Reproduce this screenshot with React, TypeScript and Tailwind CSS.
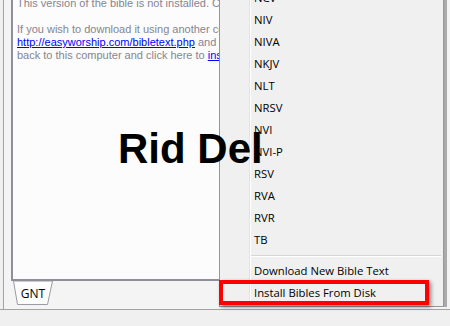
const bibles = ["NCV", "NIV", "NIVA", "NKJV", "NLT", "NRSV", "NVI", "NVI-P", "RSV", "RVA", "RVR", "TB"];

function MenuItem({ label }: { label: string }) {
  return (
    <div className="h-[22px] flex items-center pl-[34px] text-[11.3px] text-black leading-none">{label}</div>
  );
}

export default function App() {
  return (
    <div className="relative w-[450px] h-[326px] overflow-hidden bg-[#f0f0f0] font-['Liberation_Sans',sans-serif]">
      <div className="h-[310px] flex flex-col border-b border-[#a3a3a3]">
        <div className="ml-[3px] flex-1 flex flex-col border-l border-[#a2a4ad] pl-[7px] bg-[#f4f4f4]">
          <div className="h-[281px] border-l-2 border-r border-b-2 border-[#8e8f98] bg-[#fcfcfc] w-[420px] overflow-hidden">
            <div className="mt-[-3px] pl-[4px] text-[11px] leading-[13px] text-[#858590] whitespace-nowrap">
              <p>This version of the bible is not installed. Click here to download it.</p>
              <p className="h-[13px]"></p>
              <p>If you wish to download it using another computer, go to</p>
              <p>
                <span className="text-[#0000ff] underline">http://easyworship.com/bibletext.php</span> and download it, then copy it
              </p>
              <p>
                back to this computer and click here to <span className="text-[#0000ff] underline">install</span>
              </p>
            </div>
          </div>
          <div className="flex-1 flex pl-[2px]">
            <div className="relative w-[40px] h-[24px] flex items-center justify-center">
              <svg className="absolute inset-0" width="40" height="24" viewBox="0 0 40 24">
                <polygon points="0.5,0 4.5,23.5 34.5,23.5 39.5,0" fill="#fdfdfd" stroke="#9a9ba3" strokeWidth="1" />
              </svg>
              <span className="relative text-[12px] text-black font-['Open_Sans',sans-serif] pt-[2px]">GNT</span>
            </div>
          </div>
        </div>
      </div>

      {/* popup menu */}
      <div className="absolute left-[219px] top-[-14px] w-[228px] flex">
        <div className="relative w-[225px] bg-[#f0f0f0] border border-[#979797] pb-[2px] font-['Open_Sans',sans-serif]">
          <div className="absolute left-[29px] top-0 bottom-0 w-[2px] border-l border-[#e2e3e3] border-r border-r-white"></div>
          {bibles.map((b) => (
            <MenuItem key={b} label={b} />
          ))}
          <div className="h-[9px] flex items-center pl-[31px] pr-[2px]">
            <div className="w-full border-t border-[#d7d7d7] border-b border-b-white"></div>
          </div>
          <MenuItem label="Download New Bible Text" />
          <MenuItem label="Install Bibles From Disk" />
        </div>
        <div className="w-[3px] mt-[4px] bg-[#8a8a8a] opacity-70"></div>
      </div>

      {/* highlight box */}
      <div className="absolute left-[219px] top-[280px] w-[210px] h-[25px] border-4 border-[#ff0000] shadow-[2px_2px_4px_rgba(0,0,0,0.45)]"></div>

      {/* watermark */}
      <div className="absolute left-[118px] top-[128px] text-[42px] leading-none font-bold text-black whitespace-nowrap">
        Rid Del
      </div>
    </div>
  );
}
